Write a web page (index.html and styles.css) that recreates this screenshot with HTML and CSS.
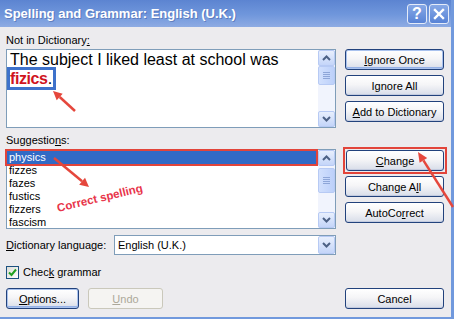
FILE: index.html
```html
<!DOCTYPE html>
<html lang="en">
<head>
  <meta charset="UTF-8" />
  <title>Spelling and Grammar: English (U.K.)</title>
  <link rel="stylesheet" href="styles.css">
</head>
<body>

  <div class="dialog">
    <div class="titlebar">
      <span class="title">Spelling and Grammar: English (U.K.)</span>
      <div class="title-buttons">
        <span class="tbtn help">?</span>
        <span class="tbtn">
          <svg width="12" height="12" viewBox="0 0 12 12"><path d="M2 2 L10 10 M10 2 L2 10" stroke="#fff" stroke-width="2.4" stroke-linecap="square"/></svg>
        </span>
      </div>
    </div>

    <div class="content">
      <div class="left">
        <div class="field-label">Not in Dictionary<u>:</u></div>
        <div class="textbox">
          <div class="sentence">The subject I liked least at school was<br><span class="bad-word"><span class="red">fizics</span>.</span></div>
          <div class="scrollbar">
            <div class="sb-btn"><svg width="9" height="6" viewBox="0 0 9 6"><path d="M1 5 L4.5 1.5 L8 5" stroke="#4d6185" stroke-width="2" fill="none"/></svg></div>
            <div class="sb-thumb small"><span class="grip"></span></div>
            <div class="sb-track"></div>
            <div class="sb-btn"><svg width="9" height="6" viewBox="0 0 9 6"><path d="M1 1 L4.5 4.5 L8 1" stroke="#4d6185" stroke-width="2" fill="none"/></svg></div>
          </div>
        </div>

        <div class="field-label second">Suggestio<u>n</u>s:</div>
        <div class="listbox">
          <ul class="list">
            <li class="selected">physics</li>
            <li>fizzes</li>
            <li>fazes</li>
            <li>fustics</li>
            <li>fizzers</li>
            <li>fascism</li>
          </ul>
          <div class="scrollbar">
            <div class="sb-btn"><svg width="9" height="6" viewBox="0 0 9 6"><path d="M1 5 L4.5 1.5 L8 5" stroke="#4d6185" stroke-width="2" fill="none"/></svg></div>
            <div class="sb-thumb"><span class="grip"></span></div>
            <div class="sb-track"></div>
            <div class="sb-btn"><svg width="9" height="6" viewBox="0 0 9 6"><path d="M1 1 L4.5 4.5 L8 1" stroke="#4d6185" stroke-width="2" fill="none"/></svg></div>
          </div>
        </div>

        <div class="dict-row">
          <span class="dict-label"><u>D</u>ictionary language:</span>
          <div class="combo">
            <span class="combo-value">English (U.K.)</span>
            <div class="sb-btn combo-btn"><svg width="9" height="6" viewBox="0 0 9 6"><path d="M1 1 L4.5 4.5 L8 1" stroke="#4d6185" stroke-width="2" fill="none"/></svg></div>
          </div>
        </div>

        <div class="check-row">
          <span class="checkbox"><svg width="11" height="11" viewBox="0 0 11 11"><path d="M2 5.5 L4.5 8 L9 2.5" stroke="#21a121" stroke-width="2" fill="none"/></svg></span>
          <span>Chec<u>k</u> grammar</span>
        </div>

        <div class="footer">
          <button class="btn default options"><u>O</u>ptions...</button>
          <button class="btn disabled undo"><u>U</u>ndo</button>
        </div>
      </div>

      <div class="right">
        <button class="btn default"><u>I</u>gnore Once</button>
        <button class="btn">I<u>g</u>nore All</button>
        <button class="btn"><u>A</u>dd to Dictionary</button>
        <div class="marked">
          <button class="btn"><u>C</u>hange</button>
        </div>
        <button class="btn">Change A<u>l</u>l</button>
        <button class="btn">AutoCo<u>r</u>rect</button>
        <button class="btn cancel">Cancel</button>
      </div>
    </div>

    <!-- annotations drawn over the dialog -->
    <svg class="arrows" width="454" height="319" viewBox="0 0 454 319">
      <g stroke="#e5473c" stroke-width="2.5" fill="#e5473c">
        <line x1="75" y1="111" x2="59.7" y2="97"/>
        <polygon points="53,91 62.7,93.7 56.7,100.3" stroke="none"/>
        <line x1="54" y1="158" x2="82.1" y2="181.3"/>
        <polygon points="89,187 79.2,184.8 85,177.8" stroke="none"/>
        <line x1="453" y1="207" x2="423.4" y2="160.4"/>
        <polygon points="418,152 427.2,158 419.6,162.8" stroke="none"/>
      </g>
    </svg>
    <span class="note">Correct spelling</span>
  </div>

</body>
</html>
```

FILE: styles.css
```css
* {
  box-sizing: border-box;
}

body {
  margin: 0;
  font-family: "Liberation Sans", Arial, sans-serif;
  font-size: 11px;
  color: #000;
  background: #ecebee;
}

u {
  text-decoration: underline;
}

.dialog {
  position: relative;
  width: 454px;
  height: 319px;
  background: #ecebee;
  border-right: 3px solid #7199dd;
  border-bottom: 2px solid #7199dd;
  display: flex;
  flex-direction: column;
}

.titlebar {
  height: 27px;
  flex: none;
  display: flex;
  align-items: center;
  justify-content: space-between;
  padding: 0 2px 0 4px;
  background: linear-gradient(#5c84d1, #7097dc 55%, #8eabe3);
}

.title {
  color: #fff;
  font-size: 13px;
  font-weight: bold;
  text-shadow: 1px 1px 0 rgba(20, 40, 110, 0.3);
}

.title-buttons {
  display: flex;
  gap: 2px;
}

.tbtn {
  width: 20px;
  height: 20px;
  border: 1px solid #e4ebf8;
  border-radius: 3px;
  background: linear-gradient(#86a8e6, #5883d6);
  color: #fff;
  display: flex;
  align-items: center;
  justify-content: center;
}

.tbtn.help {
  font-size: 16px;
  font-weight: bold;
}

.content {
  flex: 1;
  display: flex;
  gap: 9px;
  padding: 6px 7px 8px 6px;
}

.left {
  width: 330px;
  display: flex;
  flex-direction: column;
}

.field-label {
  line-height: 14px;
}

.field-label.second {
  margin-top: 5px;
}

.textbox {
  margin-top: 2px;
  height: 79px;
  border: 1px solid #7f9db9;
  background: #fff;
  display: flex;
}

.sentence {
  flex: 1;
  padding: 0 3px;
  font-size: 16px;
  line-height: 19px;
}

.bad-word {
  border: 3px solid #3e72cb;
  padding: 0 1px 0 0;
  margin-left: -3px;
}

.red {
  color: #d0141e;
  font-weight: bold;
  letter-spacing: -0.4px;
}

.scrollbar {
  width: 17px;
  flex: none;
  display: flex;
  flex-direction: column;
  background: #f1f4fd;
}

.sb-btn {
  height: 16px;
  flex: none;
  border: 1px solid #b7caf4;
  border-radius: 2px;
  background: linear-gradient(#e8effd, #c4d5f9);
  display: flex;
  align-items: center;
  justify-content: center;
}

.sb-thumb {
  height: 25px;
  margin-top: 2px;
  border: 1px solid #b7caf4;
  border-radius: 2px;
  background: linear-gradient(90deg, #d2e0fd, #bcd0fa);
  display: flex;
  align-items: center;
  justify-content: center;
}

.sb-thumb.small {
  height: 19px;
  margin-top: 0;
}

.grip {
  width: 7px;
  height: 7px;
  background: repeating-linear-gradient(#8ea6d8 0 1px, transparent 1px 2px);
}

.sb-track {
  flex: 1;
}

.listbox {
  margin-top: 2px;
  height: 80px;
  border: 1px solid #7f9db9;
  background: #fff;
  display: flex;
}

.list {
  flex: 1;
  list-style: none;
  margin: 0;
  padding: 1px 2px 0 0;
  line-height: 13px;
}

.list li {
  padding-left: 2px;
}

.list li.selected {
  background: #316ac5;
  color: #fff;
  outline: 2px solid #e2443a;
}

.dict-row {
  margin-top: 6px;
  height: 20px;
  display: flex;
  align-items: center;
}

.dict-label {
  flex: 1;
}

.combo {
  width: 222px;
  height: 20px;
  border: 1px solid #7f9db9;
  background: #fff;
  display: flex;
}

.combo-value {
  flex: 1;
  padding-left: 3px;
  line-height: 18px;
}

.combo-btn {
  width: 17px;
  height: 18px;
}

.check-row {
  margin-top: 10px;
  line-height: 14px;
  display: flex;
  align-items: center;
  gap: 4px;
}

.checkbox {
  width: 13px;
  height: 13px;
  border: 1px solid #1c5180;
  background: linear-gradient(135deg, #dcdcd7, #fff);
  display: flex;
  align-items: center;
  justify-content: center;
}

.footer {
  margin-top: auto;
  display: flex;
  gap: 9px;
}

.right {
  width: 99px;
  display: flex;
  flex-direction: column;
  gap: 5px;
  padding-top: 16px;
}

.btn {
  height: 21px;
  flex: none;
  padding: 0;
  font: inherit;
  color: #000;
  border: 1px solid #22427c;
  border-radius: 3px;
  background: linear-gradient(#fff, #f5f5f7 45%, #d8dde9);
  box-shadow: inset 0 -1px 0 #c3cbdf;
}

.btn.default {
  box-shadow: inset 0 0 0 1px #a9c2ee, inset 0 -2px 0 #95b1e6;
}

.btn.options {
  width: 73px;
}

.btn.undo {
  width: 75px;
}

.btn.disabled {
  color: #aca899;
  border-color: #cac8bb;
  background: #f5f4f2;
  box-shadow: none;
}

.marked {
  margin: 20px -3px -3px -2px;
  padding: 1px;
  border: 2px solid #e2443a;
  display: flex;
  flex-direction: column;
}

.btn.cancel {
  margin-top: auto;
}

.arrows {
  position: absolute;
  left: 0;
  top: 0;
  pointer-events: none;
}

.note {
  position: absolute;
  left: 56px;
  top: 192px;
  width: 86px;
  color: #e8354a;
  font-size: 11.5px;
  font-weight: bold;
  white-space: nowrap;
  transform: rotate(-13.5deg);
}
```
